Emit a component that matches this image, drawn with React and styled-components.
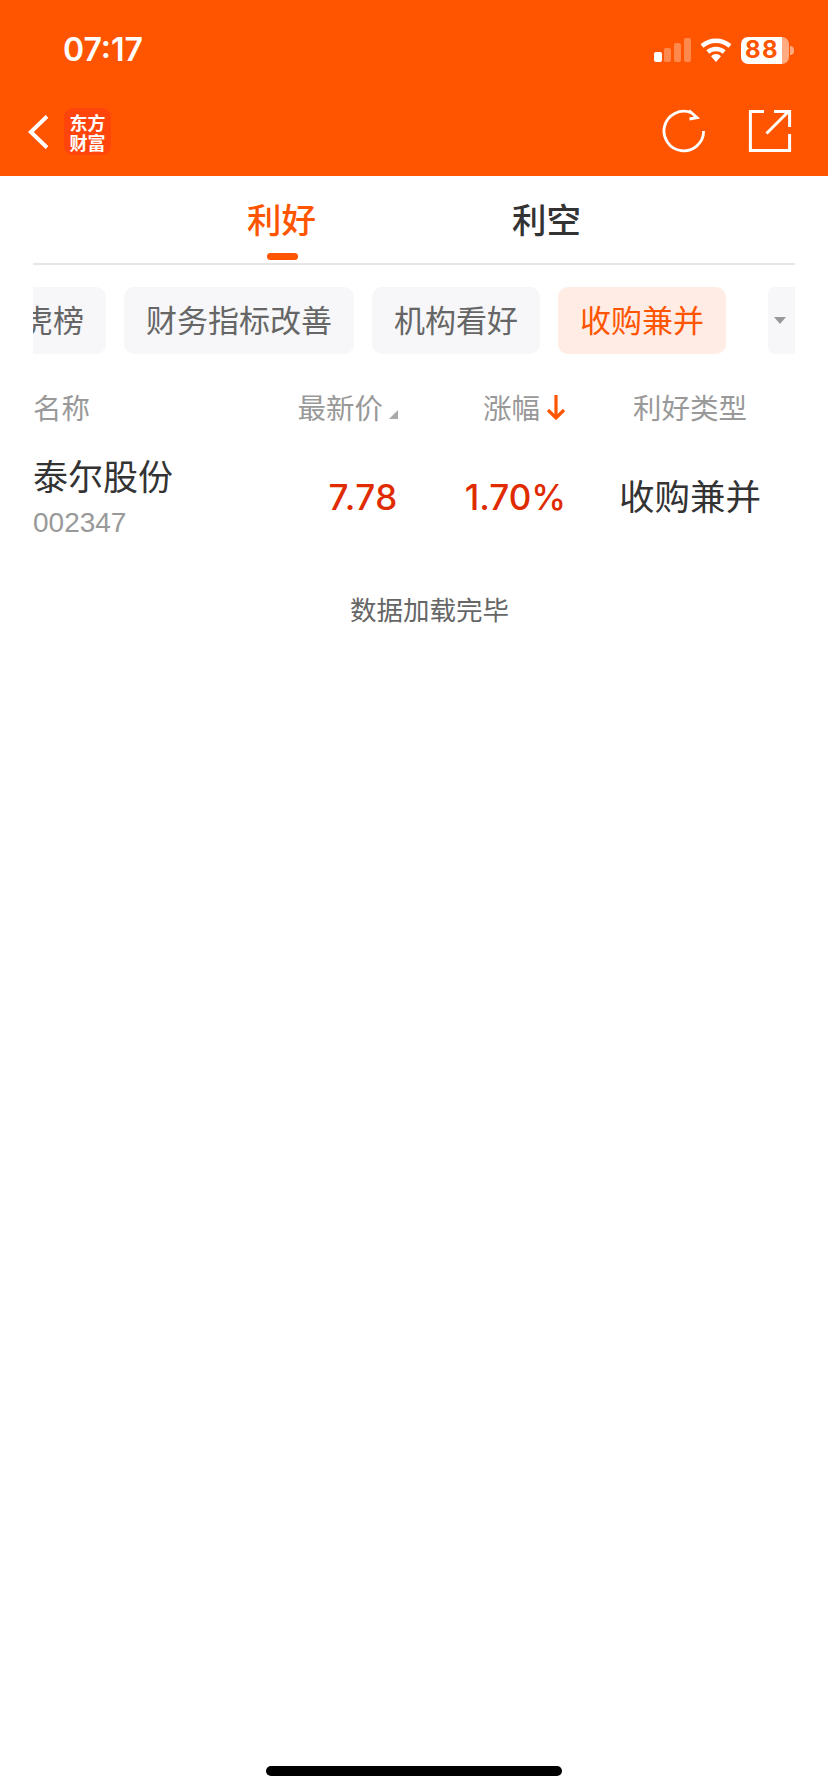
import React from "react";
import styled, { createGlobalStyle } from "styled-components";

const CJK = `"Noto Sans CJK SC", "Noto Sans", sans-serif`;
const ORANGE = "#ff5500";

const Global = createGlobalStyle`
  html, body { margin: 0; padding: 0; background: #fff; }
  * { box-sizing: border-box; }
`;

const Page = styled.div`
  width: 828px;
  height: 1792px;
  display: flex;
  flex-direction: column;
  background: #fff;
  font-family: ${CJK};
  overflow: hidden;
`;

const Header = styled.header`
  height: 176px;
  flex: none;
  background: ${ORANGE};
  display: flex;
  flex-direction: column;
`;

const StatusBar = styled.div`
  height: 100px;
  display: flex;
  align-items: center;
  justify-content: space-between;
  padding: 0 39px 0 63px;
`;

const Clock = styled.span`
  font: 600 32px/1 Inter, sans-serif;
  color: #fff;
`;

const StatusIcons = styled.div`
  display: flex;
  align-items: center;
  gap: 9px;
`;

const Battery = styled.div`
  position: relative;
  width: 48px;
  height: 27px;
  border-radius: 7px;
  background: linear-gradient(90deg, #fff 0 41px, rgba(255, 255, 255, 0.5) 41px);
  color: ${ORANGE};
  display: flex;
  align-items: center;
  justify-content: center;
  padding-right: 6px;
  font: 700 24px/1 Inter, sans-serif;
  letter-spacing: 1.5px;
  &::after {
    content: "";
    position: absolute;
    right: -5px;
    top: 9px;
    width: 4px;
    height: 9px;
    border-radius: 0 4px 4px 0;
    background: rgba(255, 255, 255, 0.5);
  }
`;

const NavBar = styled.nav`
  flex: 1;
  display: flex;
  align-items: flex-start;
  justify-content: space-between;
  padding: 9px 36px 0 28px;
`;

const NavGroup = styled.div`
  display: flex;
  align-items: center;
  gap: ${(p) => p.$gap}px;
`;

const Logo = styled.div`
  width: 47px;
  height: 47px;
  margin-top: -1px;
  border-radius: 9px;
  background: #ff450c;
  color: #fff;
  display: flex;
  flex-direction: column;
  align-items: center;
  justify-content: center;
  font: 700 18px/21px "Noto Sans CJK SC", serif;
`;

const LogoLine = styled.span`
  display: block;
  height: 20px;
  overflow: visible;
`;

const Tabs = styled.div`
  height: 89px;
  flex: none;
  margin: 0 33px;
  border-bottom: 2px solid #e6e6e8;
  display: flex;
  justify-content: center;
  gap: 165px;
`;

const Tab = styled.div`
  position: relative;
  width: 100px;
  padding-top: 18px;
  text-align: center;
  font-size: 34.5px;
  line-height: 49px;
  font-weight: 500;
  color: ${(p) => (p.$active ? ORANGE : "#333")};
  ${(p) =>
    p.$active &&
    `&::after {
      content: "";
      position: absolute;
      left: 35px;
      bottom: 3px;
      width: 31px;
      height: 7px;
      border-radius: 4px;
      background: ${ORANGE};
    }`}
`;

const ChipsRow = styled.div`
  flex: none;
  display: flex;
  margin: 22px 33px 0;
  height: 67px;
`;

const ChipScroller = styled.div`
  flex: 1;
  min-width: 0;
  overflow: hidden;
`;

const ChipTrack = styled.div`
  display: flex;
  gap: 18px;
  margin-left: -64px;
  width: max-content;
`;

const Chip = styled.div`
  height: 67px;
  padding: 0 22px;
  border-radius: 10px;
  background: ${(p) => (p.$active ? "#ffece5" : "#f7f7f9")};
  color: ${(p) => (p.$active ? ORANGE : "#666")};
  font-size: 31px;
  line-height: 63px;
  white-space: nowrap;
`;

const MoreButton = styled.div`
  flex: none;
  width: 27px;
  margin-left: 24px;
  border-radius: 7px 0 0 7px;
  background: #f7f7f9;
  display: flex;
  align-items: center;
  justify-content: center;
  padding-right: 3px;
`;

const Caret = styled.span`
  width: 0;
  height: 0;
  border-left: 6px solid transparent;
  border-right: 6px solid transparent;
  border-top: 7px solid #999;
`;

const TableGrid = styled.div`
  flex: none;
  display: grid;
  grid-template-columns: 167px 198px 168px 1fr;
  align-items: center;
  padding: 0 14px 0 33px;
`;

const HeadRow = styled(TableGrid)`
  height: 70px;
  margin-top: 18px;
  color: #999;
  font-size: 28.5px;
`;

const HeadCell = styled.div`
  display: flex;
  align-items: center;
  justify-content: ${(p) => p.$justify || "flex-start"};
  line-height: 40px;
  white-space: nowrap;
`;

const SortCorner = styled.span`
  width: 0;
  height: 0;
  margin: 14px 0 0 6px;
  border-left: 9px solid transparent;
  border-bottom: 9px solid #aaa;
`;

const BodyRow = styled(TableGrid)`
  height: 102px;
`;

const NameCell = styled.div`
  display: flex;
  flex-direction: column;
  margin-top: 6px;
`;

const StockName = styled.div`
  font-size: 35px;
  line-height: 44px;
  color: #333;
  white-space: nowrap;
`;

const StockCode = styled.div`
  font: 400 28px/32px "Liberation Sans", sans-serif;
  color: #999;
  margin-top: 10px;
`;

const Quote = styled.div`
  font: 500 35px/1 Inter, sans-serif;
  letter-spacing: ${(p) => p.$spacing || 0}px;
  color: #e02b00;
  text-align: right;
  margin-top: 8px;
`;

const TypeCell = styled.div`
  font-size: 35.5px;
  line-height: 44px;
  color: #333;
  text-align: center;
  margin-top: 4px;
`;

const EndNote = styled.div`
  flex: none;
  margin-top: 45px;
  padding-left: 31px;
  text-align: center;
  color: #666;
  font-size: 26.5px;
  line-height: 40px;
`;

const HomeBar = styled.div`
  flex: none;
  width: 296px;
  height: 10px;
  margin: auto auto 16px;
  border-radius: 5px;
  background: #000;
`;

const SignalIcon = () => (
  <svg width="37" height="24" viewBox="0 0 37 24" fill="#fff">
    <rect x="0" y="14" width="8" height="10" rx="2" />
    <rect x="10" y="10" width="7" height="14" rx="2" opacity="0.3" />
    <rect x="20" y="5" width="7" height="19" rx="2" opacity="0.3" />
    <rect x="30" y="0" width="7" height="24" rx="2" opacity="0.3" />
  </svg>
);

const WifiIcon = () => (
  <svg width="32" height="24" viewBox="0 0 32 24" fill="none" stroke="#fff" strokeWidth="4.4">
    <path d="M2 8C10 1 22 1 30 8" />
    <path d="M7.8 14C12.5 10 19.5 10 24.2 14" />
    <path d="M11 18.2 16 24l5-5.8a7 7 0 0 0-10 0Z" fill="#fff" stroke="none" />
  </svg>
);

const BackIcon = () => (
  <svg width="20" height="34" viewBox="0 0 20 34" fill="none" stroke="#fff" strokeWidth="4">
    <path d="M19 1.5 2.8 17 19 32.5" />
  </svg>
);

const RefreshIcon = () => (
  <svg width="44" height="44" viewBox="0 0 44 44" fill="none" stroke="#fff" strokeWidth="2.8">
    <path d="M41.6 22A19.8 19.8 0 1 1 29 3.6" />
    <path d="M27 1.5 35 8.7 27.5 10" />
  </svg>
);

const ShareIcon = () => (
  <svg width="44" height="44" viewBox="0 0 44 44" fill="none" stroke="#fff" strokeWidth="3">
    <path d="M16 2.4H2.4V41.6H41.6V25" />
    <path d="M18.5 24.5 41 2" />
    <path d="M26 2.4H41.6V18" />
  </svg>
);

const SortArrow = () => (
  <svg width="20" height="26" viewBox="0 0 20 26" fill="none" stroke={ORANGE} strokeWidth="3.2" style={{ marginLeft: 6 }}>
    <path d="M10 1V24" />
    <path d="M2 16 10 24 18 16" />
  </svg>
);

export default function App() {
  return (
    <Page>
      <Global />
      <Header>
        <StatusBar>
          <Clock>07:17</Clock>
          <StatusIcons>
            <SignalIcon />
            <WifiIcon />
            <Battery>88</Battery>
          </StatusIcons>
        </StatusBar>
        <NavBar>
          <NavGroup $gap={16}>
            <BackIcon />
            <Logo>
              <LogoLine>东方</LogoLine>
              <LogoLine>财富</LogoLine>
            </Logo>
          </NavGroup>
          <NavGroup $gap={42}>
            <RefreshIcon />
            <ShareIcon />
          </NavGroup>
        </NavBar>
      </Header>

      <Tabs>
        <Tab $active>利好</Tab>
        <Tab>利空</Tab>
      </Tabs>

      <ChipsRow>
        <ChipScroller>
          <ChipTrack>
            <Chip>龙虎榜</Chip>
            <Chip>财务指标改善</Chip>
            <Chip>机构看好</Chip>
            <Chip $active>收购兼并</Chip>
          </ChipTrack>
        </ChipScroller>
        <MoreButton>
          <Caret />
        </MoreButton>
      </ChipsRow>

      <HeadRow>
        <HeadCell>名称</HeadCell>
        <HeadCell $justify="flex-end">
          最新价
          <SortCorner />
        </HeadCell>
        <HeadCell $justify="flex-end">
          涨幅
          <SortArrow />
        </HeadCell>
        <HeadCell $justify="center">利好类型</HeadCell>
      </HeadRow>

      <BodyRow>
        <NameCell>
          <StockName>泰尔股份</StockName>
          <StockCode>002347</StockCode>
        </NameCell>
        <Quote $spacing={0.6}>7.78</Quote>
        <Quote>1.70%</Quote>
        <TypeCell>收购兼并</TypeCell>
      </BodyRow>

      <EndNote>数据加载完毕</EndNote>
      <HomeBar />
    </Page>
  );
}
